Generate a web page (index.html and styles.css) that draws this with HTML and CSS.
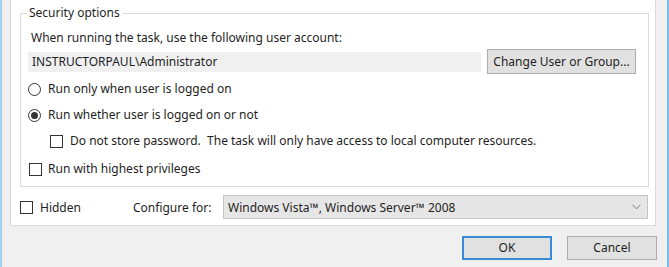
FILE: index.html
```html
<!DOCTYPE html>
<html lang="en">
<head>
    <meta charset="UTF-8">
    <title>Security options</title>
    <link rel="stylesheet" href="styles.css">
</head>
<body>
    <div class="window">
        <div class="tabpage">
            <fieldset class="group">
                <legend>Security options</legend>
                <div class="line label-line">When running the task, use the following user account:</div>
                <div class="account-row">
                    <div class="account-field">INSTRUCTORPAUL\Administrator</div>
                    <div class="btn change-btn">Change User or Group...</div>
                </div>
                <div class="line opt opt-first">
                    <span class="radio"></span>
                    <span>Run only when user is logged on</span>
                </div>
                <div class="line opt">
                    <span class="radio checked"></span>
                    <span>Run whether user is logged on or not</span>
                </div>
                <div class="line opt nested">
                    <span class="check"></span>
                    <span>Do not store password.&nbsp; The task will only have access to local computer resources.</span>
                </div>
                <div class="line opt opt-last">
                    <span class="check"></span>
                    <span>Run with highest privileges</span>
                </div>
            </fieldset>

            <div class="config-row">
                <div class="hidden-opt">
                    <span class="check"></span>
                    <span>Hidden</span>
                </div>
                <div class="config-label">Configure for:</div>
                <div class="combo">
                    <span>Windows Vista™, Windows Server™ 2008</span>
                    <svg class="chevron" width="9" height="6" viewBox="0 0 9 6">
                        <polyline points="0.5,0.8 4.5,4.8 8.5,0.8" fill="none" stroke="#7a7a7a" stroke-width="1"/>
                    </svg>
                </div>
            </div>
        </div>

        <div class="buttons">
            <div class="btn dlg-btn default">OK</div>
            <div class="btn dlg-btn">Cancel</div>
        </div>
    </div>
</body>
</html>
```

FILE: styles.css
```css
*{
    margin: 0px;
    padding: 0px;
    box-sizing: border-box;
}
body{
    background: #f0f0f0;
    font-family: "Noto Sans", "Open Sans", sans-serif;
    font-size: 12px;
    color: #1e1e1e;
}
.window{
    width: 669px;
    height: 267px;
    border-left: 2px solid #a3d0f3;
    border-right: 2px solid #7cbcec;
    background: #f0f0f0;
    padding-right: 10px;
}
.tabpage{
    margin-left: 8px;
    width: 646px;
    height: 226px;
    background: #fff;
    border: 1px solid #dadada;
    border-top: none;
    padding-top: 5px;
}
.line{
    height: 16px;
    line-height: 16px;
    white-space: nowrap;
}

/* group box */
.group{
    margin-left: 9px;
    width: 629px;
    border: 1px solid #dcdcdc;
    padding: 9px 10px 9px 7px;
}
.group legend{
    margin-left: -1px;
    padding: 0px 2px;
    line-height: 16px;
    height: 16px;
}
.label-line{
    padding-left: 3px;
}
.account-row{
    display: flex;
    align-items: center;
    height: 25px;
    margin-top: 3px;
}
.account-field{
    width: 453px;
    height: 20px;
    line-height: 20px;
    background: #f0f0f0;
    padding-left: 4px;
}
.btn{
    background: #e1e1e1;
    border: 1px solid #adadad;
    text-align: center;
    cursor: pointer;
}
.change-btn{
    margin-left: 6px;
    width: 149px;
    height: 25px;
    line-height: 23px;
}

/* radio / checkbox rows */
.opt{
    display: flex;
    align-items: center;
    margin-top: 10px;
}
.opt-first{
    margin-top: 7px;
}
.opt-last{
    margin-top: 12px;
}
.nested{
    padding-left: 22px;
}
.radio{
    width: 13px;
    height: 13px;
    border: 1px solid #333;
    border-radius: 50%;
    margin-right: 7px;
    display: flex;
    align-items: center;
    justify-content: center;
}
.radio.checked::after{
    content: "";
    width: 7px;
    height: 7px;
    border-radius: 50%;
    background: #333;
}
.check{
    width: 13px;
    height: 13px;
    border: 1px solid #333;
    background: #fff;
    margin-right: 7px;
}
.opt-last .check{
    margin-left: 1px;
    margin-right: 6px;
}

/* configure row */
.config-row{
    display: flex;
    align-items: center;
    margin: 8px 0px 0px 9px;
    width: 628px;
    height: 24px;
}
.hidden-opt{
    flex: 0 0 113px;
    display: flex;
    align-items: center;
}
.config-label{
    white-space: nowrap;
}
.combo{
    flex: 0 0 425px;
    margin-left: auto;
    height: 24px;
    background: #e6e6e6;
    border: 1px solid #c5c5c5;
    display: flex;
    align-items: center;
    justify-content: space-between;
    padding: 0px 6px 0px 4px;
}
.chevron{
    display: block;
}

/* dialog buttons */
.buttons{
    display: flex;
    justify-content: flex-end;
    gap: 15px;
    margin-top: 10px;
}
.dlg-btn{
    width: 90px;
    height: 24px;
    line-height: 22px;
}
.dlg-btn.default{
    border: 2px solid #3b8ad8;
    line-height: 20px;
}
```
